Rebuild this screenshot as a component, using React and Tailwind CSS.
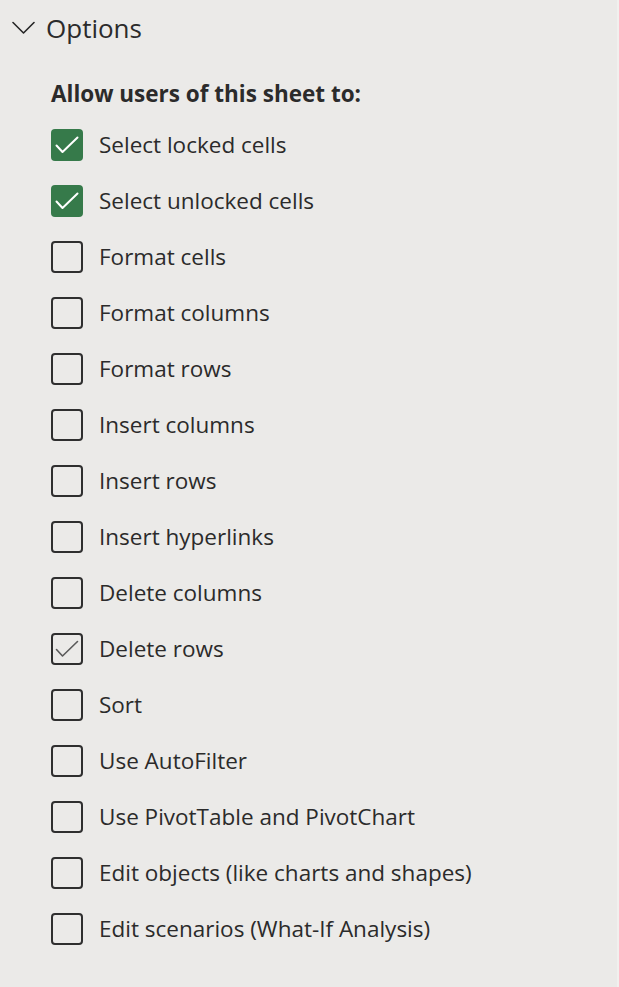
const options = [
  { label: "Select locked cells", state: "on" },
  { label: "Select unlocked cells", state: "on" },
  { label: "Format cells" },
  { label: "Format columns" },
  { label: "Format rows" },
  { label: "Insert columns" },
  { label: "Insert rows" },
  { label: "Insert hyperlinks" },
  { label: "Delete columns" },
  { label: "Delete rows", state: "hover" },
  { label: "Sort" },
  { label: "Use AutoFilter" },
  { label: "Use PivotTable and PivotChart" },
  { label: "Edit objects (like charts and shapes)" },
  { label: "Edit scenarios (What-If Analysis)" },
]

// check drawn in the box's own 32x32 space
function Check({ color, width, inset }) {
  return (
    <svg width={32 - inset * 2} height={32 - inset * 2} viewBox={`${inset} ${inset} ${32 - inset * 2} ${32 - inset * 2}`} fill="none">
      <path d="M5.5 16.5 L11.5 23 L26.5 8.5" stroke={color} strokeWidth={width} strokeLinecap="round" strokeLinejoin="round" />
    </svg>
  )
}

function Box({ state }) {
  if (state === "on") {
    return (
      <div className="w-[32px] h-[32px] shrink-0 rounded-[4px] bg-[#367a4a] flex items-center justify-center">
        <Check color="#ffffff" width={2} inset={0} />
      </div>
    )
  }
  return (
    <div className="w-[32px] h-[32px] shrink-0 rounded-[4px] border-2 border-[#2f2f2f] flex items-center justify-center">
      {state === "hover" && <Check color="#5a5a5a" width={1.6} inset={2} />}
    </div>
  )
}

export default function App() {
  return (
    <div className="w-[619px] h-[987px] bg-[#ebeae8] text-[#2b2b2b] font-['Open_Sans',sans-serif] border-r-2 border-[#f1f0ee]">
      <div className="h-[56px] flex items-center pl-[12px] gap-[11px]">
        <svg width="23" height="14" viewBox="0 0 23 14" fill="none">
          <path d="M1 1.5 L11.5 12 L22 1.5" stroke="#262626" strokeWidth="1.6" strokeLinecap="round" strokeLinejoin="round" />
        </svg>
        <span className="text-[26px] leading-none">Options</span>
      </div>
      <div className="mt-[18px] h-[40px] flex items-center pl-[51px] text-[22.5px] font-bold">
        Allow users of this sheet to:
      </div>
      <div className="mt-[3px] pl-[51px]">
        {options.map((o) => (
          <div key={o.label} className="h-[56px] flex items-center gap-[16px]">
            <Box state={o.state} />
            <span className="text-[22.5px] leading-none">{o.label}</span>
          </div>
        ))}
      </div>
    </div>
  )
}
